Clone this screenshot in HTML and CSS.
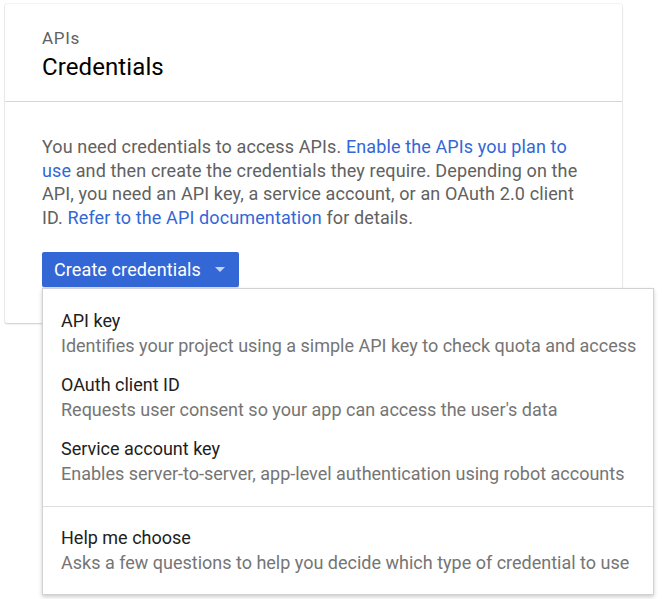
FILE: index.html
```html
<!DOCTYPE html>
<html lang="en">
<head>
<meta charset="utf-8">
<title>Credentials</title>
<link rel="stylesheet" href="styles.css">
</head>
<body>
<div class="page">
  <section class="card">
    <header class="card-header">
      <div class="eyebrow">APIs</div>
      <h1 class="title">Credentials</h1>
    </header>
    <div class="card-body">
      <p class="intro">You need credentials to access APIs. <a href="#" class="link">Enable the APIs you plan to use</a> and then create the credentials they require. Depending on the API, you need an API key, a service account, or an OAuth 2.0 client ID. <a href="#" class="link">Refer to the API documentation</a> for details.</p>
      <div class="menu-anchor">
        <button class="btn-primary" type="button">Create credentials<svg class="caret" width="10" height="5" viewBox="0 0 10 5"><path d="M0 0h10L5 5z" fill="currentColor"/></svg></button>
        <div class="dropdown">
          <ul class="menu-group">
            <li class="menu-item"><div class="item-title">API key</div><div class="item-desc">Identifies your project using a simple API key to check quota and access</div></li>
            <li class="menu-item"><div class="item-title">OAuth client ID</div><div class="item-desc">Requests user consent so your app can access the user's data</div></li>
            <li class="menu-item"><div class="item-title">Service account key</div><div class="item-desc">Enables server-to-server, app-level authentication using robot accounts</div></li>
          </ul>
          <ul class="menu-group menu-group-last">
            <li class="menu-item"><div class="item-title">Help me choose</div><div class="item-desc">Asks a few questions to help you decide which type of credential to use</div></li>
          </ul>
        </div>
      </div>
    </div>
  </section>
</div>
</body>
</html>
```
FILE: styles.css
```css
html, body {
  margin: 0;
  padding: 0;
  background: #fff;
}
body {
  min-height: 599px;
  font-family: Roboto, "Liberation Sans", Arial, sans-serif;
  -webkit-font-smoothing: antialiased;
}
.page {
  padding: 4px 0 0 5px;
}
.card {
  width: 617px;
  background: #fff;
  border-radius: 2px;
  box-shadow: 0 1px 2px rgba(0,0,0,.18), 0 0 0 1px rgba(0,0,0,.04);
}
.card-header {
  padding: 24px 37px 0;
  height: 73px;
  border-bottom: 1px solid #d6d6d6;
}
.eyebrow {
  font-size: 17px;
  line-height: 20px;
  letter-spacing: 0.7px;
  color: #616161;
}
.title {
  margin: 4px 0 0;
  font-size: 24px;
  line-height: 30px;
  font-weight: 400;
  letter-spacing: 0.1px;
  color: #000;
}
.card-body {
  padding: 33px 37px 36px;
}
.intro {
  margin: 0 0 23px;
  font-size: 18px;
  line-height: 23.6px;
  letter-spacing: 0.12px;
  color: #616161;
}
.link {
  color: #3367d6;
  text-decoration: none;
}
.menu-anchor {
  position: relative;
}
.btn-primary {
  display: inline-flex;
  align-items: center;
  height: 35px;
  width: 197px;
  padding: 0 0 0 12px;
  border: 0;
  border-radius: 2px;
  background: #3367d6;
  color: #fff;
  font-family: inherit;
  font-size: 18px;
  letter-spacing: 0.1px;
  cursor: pointer;
  box-shadow: 0 1px 1px rgba(0,0,0,.15);
}
.caret {
  margin-left: 14px;
  color: #c5d4f3;
}
.dropdown {
  position: absolute;
  top: 36px;
  left: 0;
  width: 610px;
  background: #fff;
  border: 1px solid #d2d2d2;
  box-shadow: 0 2px 4px rgba(0,0,0,.2);
  z-index: 2;
}
.menu-group {
  list-style: none;
  margin: 0;
  padding: 12px 0 13px;
  border-bottom: 1px solid #e0e0e0;
}
.menu-group-last {
  border-bottom: 0;
  padding: 11px 0 12px;
}
.menu-item {
  padding: 8px 10px 7px 18px;
  white-space: nowrap;
}
.item-title {
  font-size: 18px;
  line-height: 24px;
  margin-bottom: 1px;
  color: #212121;
}
.item-desc {
  font-size: 18px;
  line-height: 24px;
  color: #757575;
}
```
